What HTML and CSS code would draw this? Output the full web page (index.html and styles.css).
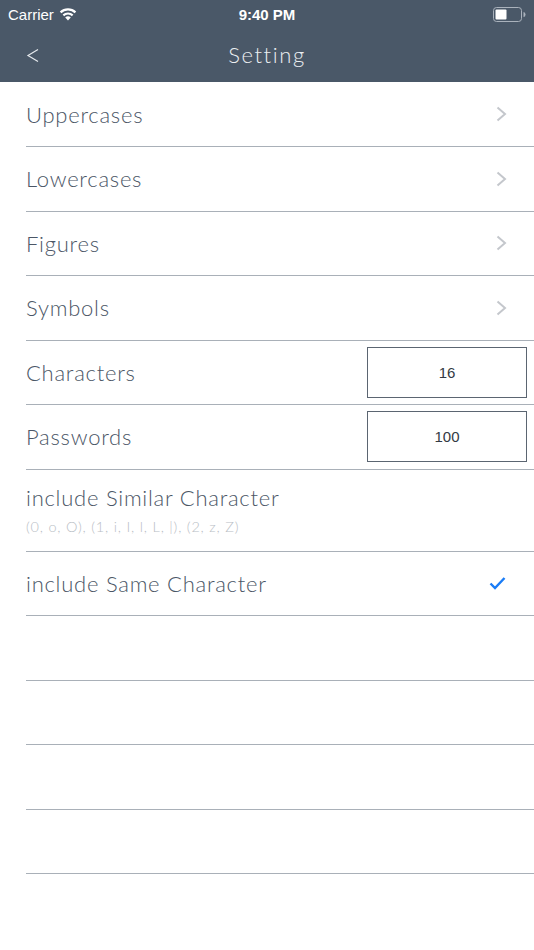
FILE: index.html
```html
<!DOCTYPE html>
<html>
<head>
<meta charset="utf-8">
<link rel="stylesheet" href="styles.css">
</head>
<body>
<header class="top">
  <div class="status">
    <div class="status-left">
      <span class="carrier">Carrier</span>
      <svg class="wifi" width="18" height="13" viewBox="0 0 18 13">
        <path d="M9 12.5 L6.2 9.4 A4.2 4.2 0 0 1 11.8 9.4 Z" fill="#fff"/>
        <path d="M3.6 6.6 A7.8 7.8 0 0 1 14.4 6.6 L12.9 8.2 A5.6 5.6 0 0 0 5.1 8.2 Z" fill="#fff"/>
        <path d="M0.8 3.6 A11.8 11.8 0 0 1 17.2 3.6 L15.7 5.2 A9.6 9.6 0 0 0 2.3 5.2 Z" fill="#fff"/>
      </svg>
    </div>
    <div class="time">9:40 PM</div>
    <div class="status-right">
      <svg width="33" height="15" viewBox="0 0 33 15">
        <rect x="0.5" y="0.5" width="28" height="14" rx="3" fill="none" stroke="#aab2bc" stroke-width="1"/>
        <rect x="2.5" y="2.5" width="11" height="10" rx="1" fill="#fff"/>
        <path d="M30.5 5 A2 2.5 0 0 1 30.5 10 Z" fill="#aab2bc"/>
      </svg>
    </div>
  </div>
  <nav class="nav">
    <svg class="back" width="14" height="18" viewBox="0 0 14 18">
      <path d="M12 2.5 L2 8.5 L12 14.5" fill="none" stroke="#e6eaee" stroke-width="1.2"/>
    </svg>
    <h1 class="title">Setting</h1>
  </nav>
</header>

<main class="list">
  <div class="row"><span class="label">Uppercases</span><svg class="chev" width="11" height="16" viewBox="0 0 11 16"><path d="M1.5 1.5 L9 8 L1.5 14.5" fill="none" stroke="#c4c7cc" stroke-width="2"/></svg></div>
  <div class="row"><span class="label">Lowercases</span><svg class="chev" width="11" height="16" viewBox="0 0 11 16"><path d="M1.5 1.5 L9 8 L1.5 14.5" fill="none" stroke="#c4c7cc" stroke-width="2"/></svg></div>
  <div class="row"><span class="label">Figures</span><svg class="chev" width="11" height="16" viewBox="0 0 11 16"><path d="M1.5 1.5 L9 8 L1.5 14.5" fill="none" stroke="#c4c7cc" stroke-width="2"/></svg></div>
  <div class="row"><span class="label">Symbols</span><svg class="chev" width="11" height="16" viewBox="0 0 11 16"><path d="M1.5 1.5 L9 8 L1.5 14.5" fill="none" stroke="#c4c7cc" stroke-width="2"/></svg></div>
  <div class="row row-input"><span class="label">Characters</span><div class="field">16</div></div>
  <div class="row row-input"><span class="label">Passwords</span><div class="field">100</div></div>
  <div class="row row-tall">
    <div class="stack">
      <span class="label">include Similar Character</span>
      <span class="sub">(0, o, O), (1, i, I, l, L, |), (2, z, Z)</span>
    </div>
  </div>
  <div class="row"><span class="label">include Same Character</span><svg class="check" width="17" height="14" viewBox="0 0 17 14"><path d="M1.5 7.5 L6 12 L15.5 2" fill="none" stroke="#1a7cf6" stroke-width="2.4"/></svg></div>
  <div class="row"></div>
  <div class="row"></div>
  <div class="row"></div>
  <div class="row"></div>
</main>
</body>
</html>
```

FILE: styles.css
```css
* { box-sizing: border-box; }
html, body { margin: 0; padding: 0; }
body {
  width: 534px;
  height: 950px;
  overflow: hidden;
  background: #fff;
  font-family: "Lato", "Open Sans", sans-serif;
}
.top {
  background: #4a5868;
  height: 82px;
  display: flex;
  flex-direction: column;
}
.status {
  height: 28px;
  display: flex;
  align-items: center;
  justify-content: space-between;
  padding: 0 8px;
  color: #fff;
  font-family: "Liberation Sans", Arial, sans-serif;
  font-size: 15px;
}
.status-left, .status-right { flex: 1; display: flex; align-items: center; }
.status-right { justify-content: flex-end; }
.carrier { margin-right: 5px; }
.time { font-weight: bold; font-size: 15px; }
.nav {
  flex: 1;
  display: flex;
  align-items: center;
  justify-content: center;
  position: relative;
  padding-bottom: 2px;
}
.back { position: absolute; left: 26px; top: 19px; }
.title {
  margin: 0;
  font-weight: 300;
  font-size: 22px;
  color: #eceff2;
  letter-spacing: 1.6px;
}
.list { padding-top: 0.5px; }
.row {
  margin-left: 26px;
  height: 64.5px;
  border-bottom: 1px solid #a9b0b8;
  display: flex;
  align-items: center;
  justify-content: space-between;
  padding-right: 27px;
  color: #4b5666;
}
.label {
  font-size: 22px;
  font-weight: 300;
  letter-spacing: 0.75px;
}
.row-input { padding-right: 7px; }
.field {
  width: 160px;
  height: 51px;
  border: 1px solid #5b6571;
  display: flex;
  align-items: center;
  justify-content: center;
  font-family: "Liberation Sans", Arial, sans-serif;
  font-size: 15px;
  color: #333a44;
}
.row-tall { height: 82px; }
.stack { display: flex; flex-direction: column; padding-bottom: 2px; }
.sub {
  font-size: 14.5px;
  font-weight: 300;
  color: #b9bec5;
  margin-top: 7px;
  letter-spacing: 0.8px;
}
.check { margin-right: 1px; }
```
